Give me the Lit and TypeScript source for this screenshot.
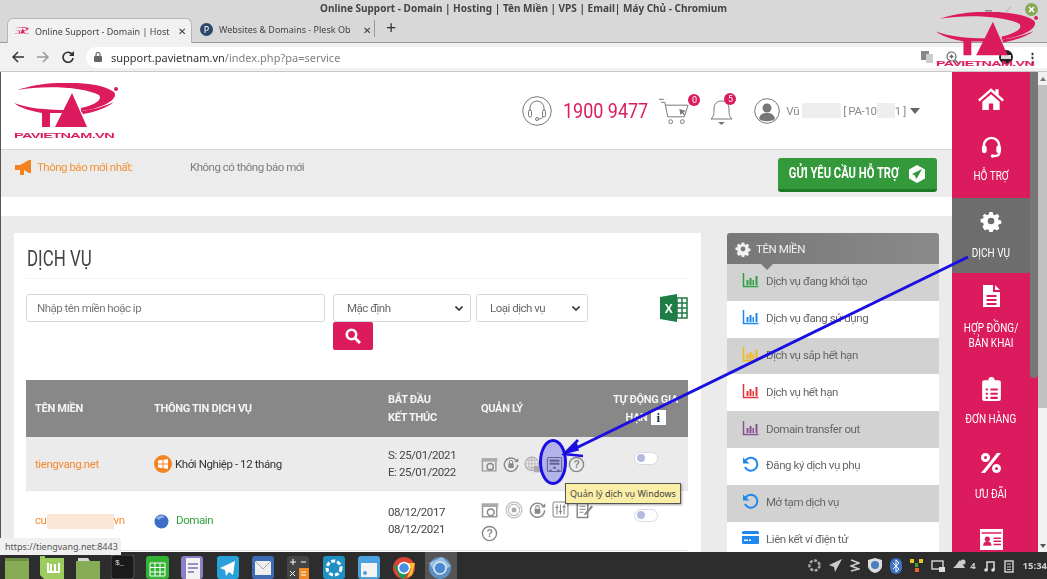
import { LitElement, html, css, svg, unsafeCSS } from "lit";
import { customElement } from "lit/decorators.js";

const PINK = "#dc1b5e";
const pink = unsafeCSS(PINK);

const logo = (w: number) => html`<svg width=${w} height=${(w * 56) / 104} viewBox="0 0 104 56">
  <g fill=${PINK}>
    <path d="M4 7C30-3 84-3 100 9c5 6-9 16-33 19v-3c13-3 22-8 18-13C70 4 30 2 4 7z" />
    <path d="M0 20c14 5 30 7 52 7l-1 3H36v14h-8V30C17 28 6 25 0 20z" />
    <path d="M58 10l15 34H41z" />
    <path d="M67 28c12-1 24-5 33-9-8 6-19 10-31 12z" />
  </g>
  <circle cx="102" cy="6" r="2" fill=${PINK} />
  <text x="0" y="55" textLength="100" lengthAdjust="spacingAndGlyphs" font-family="Liberation Sans" font-weight="700" font-size="8" fill=${PINK}>PAVIETNAM.VN</text>
</svg>`;

const ic = (size: number, body: unknown, cls = "") =>
  html`<svg class=${cls} width=${size} height=${size} viewBox="0 0 24 24">${body}</svg>`;

const gear = svg`<path fill="currentColor" fill-rule="evenodd" d="M10 1h4l.6 3 2.2.9 2.6-1.7 2.8 2.8-1.7 2.6.9 2.2 3 .6v4l-3 .6-.9 2.2 1.7 2.6-2.8 2.8-2.6-1.7-2.2.9-.6 3h-4l-.6-3-2.2-.9-2.6 1.7L1.600 19l1.700-2.600-.9-2.200-3-.6v-4l3-.6.9-2.200L1.600 6l2.800-2.800L7 4.900l2.200-.9zM12 8a4 4 0 100 8 4 4 0 000-8z" transform="translate(1.200 1.200) scale(.9)" />`;
const home = svg`<path fill="currentColor" d="M12 3L0 13.500l1.500 1.700L12 6l10.500 9.200 1.500-1.700L19 9V4h-3v2.400zM4 15.500V23h6v-6h4v6h6v-7.500L12 8.500z" />`;
const headset = svg`<path fill="none" stroke="currentColor" stroke-width="2.600" d="M4 14v-3a8 8 0 0116 0v8c0 2-2 3-6 3" /><rect x="2" y="11" width="5" height="8" rx="2.500" fill="currentColor" /><rect x="17" y="11" width="5" height="8" rx="2.500" fill="currentColor" /><circle cx="13" cy="22" r="1.800" fill="currentColor" />`;
const docIcon = svg`<path fill="currentColor" fill-rule="evenodd" d="M4 1h10v7h7v15H4zM16 1l5 5h-5zM7.500 11v2h10v-2zm0 4v2h10v-2zm0 4v2h10v-2z" />`;
const clipboard = svg`<path fill="currentColor" fill-rule="evenodd" d="M5 3h4a3 3 0 016 0h4a2 2 0 012 2v16a2 2 0 01-2 2H5a2 2 0 01-2-2V5a2 2 0 012-2zm6 8v2h7v-2zm0 4v2h7v-2zm0 4v2h7v-2zM6.500 11v2h2v-2zm0 4v2h2v-2zm0 4v2h2v-2z" />`;
const percent = svg`<path fill="currentColor" fill-rule="evenodd" d="M18 2h4L6 22H2zM6.500 2a4.500 4.500 0 110 9 4.500 4.500 0 010-9zm0 3a1.500 1.500 0 100 3 1.500 1.500 0 000-3zm11 8a4.500 4.500 0 110 9 4.500 4.500 0 010-9zm0 3a1.500 1.500 0 100 3 1.500 1.500 0 000-3z" />`;
const card = svg`<path fill="currentColor" fill-rule="evenodd" d="M1 2h22v20H1zm1.500 3v1.500h19V5zM8 9a2.500 2.500 0 100 5 2.500 2.500 0 000-5zm-4 9h8c0-3-1.500-4-4-4s-4 1-4 4zm10-8v1.500h7V10zm0 3v1.500h7V13zm0 3v1.500h7V16z" />`;
const chart = (c: string) => html`<svg class="lead" width="16" height="16" viewBox="0 0 16 16">
  <path fill="none" stroke=${c} stroke-width="1.500" d="M1 1v13.500h15" />
  <path fill=${c} d="M4 8h2v5H4zM7 6h2v7H7zM10 8h1.500v5H10zM13 4h2v9h-2z" />
</svg>`;
const undo = html`<svg class="lead" width="17" height="17" viewBox="0 0 17 17">
  <path fill="none" stroke="#1e88f0" stroke-width="2" d="M3.500 4.500A6.500 6.500 0 1 1 3 11" />
  <path fill="#1e88f0" d="M1 1.500l6.500 6H1z" />
</svg>`;
const walletIcon = html`<svg class="lead" width="17" height="15" viewBox="0 0 17 15">
  <rect y="1" width="17" height="13" rx="1.500" fill="#1e88f0" />
  <rect y="4" width="17" height="2" fill="#fff" />
  <rect x="2" y="9.500" width="4" height="1.500" fill="#fff" /><rect x="7" y="9.500" width="2" height="1.500" fill="#fff" />
</svg>`;

const m = {
  browser: svg`<path fill="none" stroke="#999" stroke-width="2" d="M2 5h19v16H2z" /><path fill="#aaa" d="M1 3h22v5H1z" /><circle cx="13" cy="15" r="4.500" fill="none" stroke="#888" stroke-width="2" />`,
  lock: svg`<path fill="none" stroke="#888" stroke-width="2" d="M20 7A10 10 0 1 0 22 13" /><path fill="#888" d="M23 3v6h-6z" /><rect x="8" y="11" width="8" height="7" rx="1" fill="#888" /><path fill="none" stroke="#888" stroke-width="1.500" d="M9.500 11V9a2.500 2.500 0 015 0v2" />`,
  globe: svg`<circle cx="11" cy="11" r="9.500" fill="none" stroke="#aaa" stroke-width="1.500" /><path fill="none" stroke="#aaa" d="M1.500 11h19M3 6h16M3 16h16M11 1.500v19M11 1.500c-6 5-6 14 0 19M11 1.500c6 5 6 14 0 19" /><rect x="14" y="14" width="9" height="9" fill="#aaa" />`,
  server: svg`<rect x="2" y="2" width="20" height="20" rx="2" fill="none" stroke="#777" stroke-width="1.500" /><path fill="#777" d="M5 5h14v3H5zM5 9.500h14v3H5zM10 15h4v3h-4zM5 19h3v2H5zM16 19h3v2h-3z" />`,
  help: svg`<circle cx="12" cy="12" r="10" fill="none" stroke="#888" stroke-width="2" /><text x="12" y="17.500" text-anchor="middle" font-family="Liberation Sans" font-weight="700" font-size="15" fill="#888">?</text>`,
  disc: svg`<circle cx="12" cy="12" r="10.500" fill="none" stroke="#bbb" stroke-width="1.500" /><circle cx="12" cy="12" r="7.500" fill="none" stroke="#bbb" stroke-width="1.500" /><rect x="9" y="9" width="6" height="6" fill="#aaa" />`,
  sliders: svg`<rect x="1.500" y="1.500" width="21" height="21" rx="2" fill="none" stroke="#888" stroke-width="1.500" /><path stroke="#888" stroke-width="1.500" d="M7 5v14M12 5v14M17 5v14" /><path fill="#888" d="M5 8h4v2H5zM10 14h4v2h-4zM15 7h4v2h-4z" />`,
  edit: svg`<path fill="none" stroke="#888" stroke-width="2" d="M3 2h14v20H3z" /><path stroke="#888" stroke-width="1.500" d="M6 7h8M6 11h8M6 15h5" /><path fill="#888" d="M22 6l2 2-9 10-3 1 1-3z" />`,
};

const menuItems = [
  { t: "Dịch vụ đang khởi tạo", i: chart("#2f9e44") },
  { t: "Dịch vụ đang sử dụng", i: chart("#1e88f0") },
  { t: "Dịch vụ sắp hết hạn", i: chart("#f5b914") },
  { t: "Dịch vụ hết hạn", i: chart("#e5343e") },
  { t: "Domain transfer out", i: chart("#8a4f96") },
  { t: "Đăng ký dịch vụ phụ", i: undo },
  { t: "Mở tạm dịch vụ", i: undo },
  { t: "Liên kết ví điện tử", i: walletIcon },
];

const taskIcons = [
  html`<svg width="24" height="24"><rect y="3" width="24" height="21" fill="#86ad55" /><rect y="3" width="24" height="3" fill="#6d9144" /></svg>`,
  html`<svg width="24" height="24"><path fill="#9ccc5f" d="M0 1h5v2h19v21H4l-4-4z" /><path fill="none" stroke="#fff" stroke-width="2" d="M8 8v9h11V8M11 16V9M15 16V9" /></svg>`,
  html`<svg width="24" height="24"><path fill="#86ad55" d="M0 6h24v18H0z" /><path fill="#d7d7d7" d="M2 3h10l2 3H2z" /></svg>`,
  html`<svg width="24" height="24"><rect width="23" height="24" rx="3" fill="#1a1a1a" stroke="#555" /><text x="4" y="10" font-size="8" font-family="Liberation Mono" fill="#ddd">$_</text></svg>`,
  html`<svg width="24" height="24"><rect y="1" width="23" height="23" rx="3" fill="#33b233" /><path fill="none" stroke="#fff" d="M4 8h15v13H4zM4 12.500h15M4 17h15M9 8v13M14 8v13" /></svg>`,
  html`<svg width="24" height="24"><rect y="1" width="22" height="23" rx="3" fill="#8b7fc7" /><rect x="5" y="3" width="14" height="21" fill="#f2f2f2" /><path stroke="#7a6fb8" stroke-width="1.500" d="M7 9h10M7 13h10M7 17h6" /></svg>`,
  html`<svg width="24" height="24"><rect y="1" width="22" height="23" rx="3" fill="#2aa0da" /><path fill="#fff" d="M18 6L3 13l5 2 1 6 3-4 4 3z" /></svg>`,
  html`<svg width="24" height="24"><rect y="1" width="22" height="23" rx="3" fill="#3d6cb5" /><rect x="3" y="6" width="16" height="14" fill="#eee" /><path fill="none" stroke="#aaa" d="M3 6l8 8 8-8" /></svg>`,
  html`<svg width="24" height="24"><rect y="1" width="22" height="23" rx="3" fill="#444" /><rect x="12" y="13" width="10" height="11" fill="#f08a24" /><path stroke="#fff" d="M3 7h6M6 4v6M14 7h5M3 16l5 5M8 16l-5 5M14 17h5M14 20h5" /></svg>`,
  html`<svg width="24" height="24"><rect y="1" width="22" height="23" rx="3" fill="#1f8fc4" /><circle cx="11" cy="13" r="7" fill="none" stroke="#fff" stroke-width="3" stroke-dasharray="4 2" /></svg>`,
  html`<svg width="24" height="24"><rect y="1" width="22" height="23" rx="3" fill="#4aa3df" /><rect x="3" y="8" width="16" height="14" fill="#f3f3f3" /><circle cx="7" cy="18" r="2" fill="#4aa3df" /></svg>`,
  html`<svg width="24" height="24"><circle cx="11" cy="13" r="11" fill="#db4437" /><path fill="#0f9d58" d="M1 10l6 12 4 2 5-10z" /><path fill="#fbc02d" d="M11 8h11l-3 12-5 3 4-9z" /><circle cx="11" cy="13" r="5.500" fill="#4a90e2" stroke="#fff" stroke-width="1.500" /></svg>`,
  html`<svg width="24" height="24"><circle cx="11" cy="13" r="11" fill="#5d8fc0" /><path fill="#9cc0df" d="M0 8l8 12 14-9-9-9z" /><circle cx="11" cy="13" r="6" fill="#4a8ad4" stroke="#dfe8f0" stroke-width="1.500" /></svg>`,
];

@customElement("app-root")
export class AppRoot extends LitElement {
  static styles = css`
    :host {
      display: block;
      width: 1047px;
      height: 579px;
      overflow: hidden;
      position: relative;
      font-family: Roboto, "Noto Sans", sans-serif;
      letter-spacing: -0.35px;
    }
    svg {
      display: block;
      flex: none;
    }
    .shell {
      height: 579px;
      display: flex;
      flex-direction: column;
      filter: blur(0.3px);
    }
    .titlebar {
      height: 17px;
      background: #d8d8d8;
      text-align: center;
      font: 700 10px/16px "Noto Sans", sans-serif;
      letter-spacing: 0;
      color: #444;
    }
    .tabs {
      height: 26px;
      background: #d8d8d8;
      display: flex;
      align-items: flex-end;
      padding-left: 7px;
      border-bottom: 1px solid #9a9a9a;
      box-sizing: border-box;
      font: 400 9px "Noto Sans", sans-serif;
      letter-spacing: 0;
      color: #444;
    }
    .tab {
      height: 25px;
      display: flex;
      align-items: center;
      box-sizing: border-box;
    }
    .tab.active {
      width: 185px;
      background: #f1f1f1;
      border: 1px solid #b5b5b5;
      border-bottom: 0;
      border-radius: 6px 6px 0 0;
      padding-left: 7px;
      margin-bottom: -1px;
    }
    .tab.other {
      width: 184px;
      padding-left: 8px;
    }
    .tab .name {
      flex: 1;
      white-space: nowrap;
      margin-left: 6px;
    }
    .tab .x {
      width: 18px;
      flex: none;
      text-align: center;
      font-size: 10px;
      color: #333;
    }
    .plus {
      font-size: 18px;
      padding: 0 0 2px 11px;
      border-left: 1px solid #999;
      line-height: 15px;
      margin-bottom: 5px;
      color: #333;
      margin-left: -2px;
    }
    .dot-p {
      width: 13px;
      height: 13px;
      border-radius: 50%;
      background: #2c4a68;
      color: #fff;
      font-size: 9px;
      text-align: center;
      line-height: 13px;
      flex: none;
    }
    .toolbar {
      height: 29px;
      background: #f1f1f1;
      border-bottom: 1px solid #c8c8c8;
      box-sizing: border-box;
      display: flex;
      align-items: center;
      padding: 3px 0 3px 12px;
      gap: 13px;
      color: #444;
    }
    .omni {
      flex: 1;
      height: 21px;
      background: #fff;
      border-radius: 11px 0 0 11px;
      display: flex;
      align-items: center;
      padding-left: 8px;
      font: 400 11px "Noto Sans", sans-serif;
      letter-spacing: 0;
      color: #808080;
      margin-left: -1px;
    }
    .omni b {
      font-weight: 400;
      color: #333;
    }
    .omni .tools {
      margin-left: auto;
      display: flex;
      align-items: center;
      gap: 13px;
      padding-right: 8px;
      color: #666;
    }
    .page {
      flex: 1;
      min-height: 0;
      display: flex;
      overflow: hidden;
      background: #ebebeb;
    }
    .main {
      width: 952px;
      display: flex;
      flex-direction: column;
      overflow: hidden;
      border-left: 1px solid #555;
      box-sizing: border-box;
    }
    .head {
      height: 77px;
      flex: none;
      background: #fff;
      border-bottom: 1px solid #d8d8d8;
      display: flex;
      align-items: center;
      padding-left: 13px;
      box-sizing: content-box;
    }
    .head .right {
      margin-left: auto;
      display: flex;
      align-items: center;
      margin-right: 32px;
    }
    .phone {
      display: inline-block;
      width: 85px;
      font-size: 21px;
      color: ${pink};
      margin: 0 11px;
      letter-spacing: 0;
      white-space: nowrap;
      transform: scaleX(0.855);
      transform-origin: left center;
    }
    .badged {
      position: relative;
    }
    .badge {
      position: absolute;
      width: 12px;
      height: 12px;
      border-radius: 50%;
      background: ${pink};
      color: #fff;
      font-size: 9px;
      line-height: 12px;
      text-align: center;
    }
    .user {
      font-size: 11.500px;
      color: #8a8a8a;
      margin-left: 6px;
      display: flex;
      align-items: center;
      white-space: nowrap;
    }
    .blur {
      display: inline-block;
      background: #eeeeee;
      height: 15px;
    }
    .caret {
      width: 0;
      height: 0;
      border: 5px solid transparent;
      border-top: 6px solid #666;
      border-bottom: 0;
      margin-left: 4px;
    }
    .notice {
      height: 47px;
      flex: none;
      background: #ececec;
      display: flex;
      align-items: flex-start;
      padding: 8px 0 0 14px;
      box-sizing: border-box;
      font-size: 11.500px;
      letter-spacing: -0.5px;
      color: #7d7d7d;
      line-height: 19px;
    }
    .notice .hot {
      width: 153px;
      color: #f59238;
      margin-left: 4px;
    }
    .send {
      margin-left: auto;
      margin-right: 15px;
      width: 159px;
      height: 34px;
      box-sizing: border-box;
      border-bottom: 3px solid #1c7a25;
      border-radius: 3px;
      background: #33993a;
      color: #fff;
      font-size: 14px;
      font-weight: 700;
      display: flex;
      align-items: center;
      justify-content: center;
      gap: 9px;
      letter-spacing: 0;
    }
    .send span {
      transform: scaleX(0.8);
      margin: 0 -14px;
      white-space: nowrap;
    }
    .strip {
      height: 19px;
      flex: none;
      background: #fff;
    }
    .body {
      flex: 1;
      display: flex;
      padding: 17px 0 0 13px;
      min-height: 0;
    }
    .cardbox {
      width: 687px;
      flex: none;
      background: #fff;
      padding: 0 13px 0 12px;
      box-sizing: border-box;
      overflow: hidden;
    }
    h2 {
      margin: 0;
      height: 45px;
      padding-left: 1px;
      font-size: 22px;
      font-weight: 400;
      line-height: 52px;
      color: #444;
      border-bottom: 1px solid #f3f3f3;
      letter-spacing: 0;
    }
    h2 span {
      display: inline-block;
      transform: scaleX(0.77);
      transform-origin: left center;
    }
    .filters {
      display: grid;
      grid-template-columns: 307px 143px 112px 1fr;
      grid-template-rows: 28px 28px;
      margin-top: 15px;
      height: 86px;
      font-size: 11.500px;
      letter-spacing: -0.5px;
      color: #666;
    }
    .field {
      height: 28px;
      border: 1px solid #d3d8de;
      border-radius: 3px;
      box-sizing: border-box;
      display: flex;
      align-items: center;
      padding-left: 13px;
      background: #fff;
      justify-content: space-between;
    }
    .field.input {
      width: 299px;
      padding-left: 10px;
      color: #777;
    }
    .field.def {
      width: 138px;
    }
    .field .chev {
      margin-right: 7px;
    }
    .fbtn {
      grid-column: 2;
      grid-row: 2;
      width: 40px;
      height: 28px;
      background: ${pink};
      border-radius: 2px;
      display: flex;
      align-items: center;
      justify-content: center;
    }
    .excel {
      justify-self: end;
    }
    table {
      width: 662px;
      border-collapse: collapse;
      table-layout: fixed;
      font-size: 11.500px;
      letter-spacing: -0.42px;
    }
    th {
      background: #888;
      color: #f4f4f4;
      text-align: left;
      font-weight: 700;
      padding: 0 0 0 9px;
      height: 57px;
      line-height: 18px;
      font-size: 11px;
      letter-spacing: -0.3px;
    }
    th.auto {
      text-align: center;
      padding: 0;
    }
    .info {
      display: inline-block;
      width: 15px;
      height: 15px;
      line-height: 15px;
      background: #fff;
      color: #234;
      font-family: "Liberation Serif", serif;
      font-weight: 700;
      font-size: 13px;
      text-align: center;
      vertical-align: middle;
      margin-left: 3px;
    }
    td {
      padding: 2px 0 0 9px;
      color: #444;
      line-height: 17.500px;
      border-bottom: 1px solid #e4e4e4;
      box-sizing: border-box;
    }
    td.sw {
      padding: 0;
    }
    tr.r1 td {
      height: 53px;
      background: #ebebeb;
    }
    tr.r2 td {
      height: 60px;
    }
    .dom {
      color: #f58a33;
      white-space: nowrap;
    }
    .svc {
      display: flex;
      align-items: center;
      gap: 3px;
      color: #333;
    }
    .svc.g {
      color: #34a33c;
      gap: 7px;
    }
    .tools {
      display: flex;
      flex-wrap: wrap;
      align-items: center;
      gap: 5px;
    }
    .tools.wide {
      gap: 6px;
      width: 118px;
    }
    .toggle {
      width: 24px;
      height: 13px;
      border: 1px solid #d8d8e4;
      border-radius: 7px;
      background: #fff;
      box-sizing: border-box;
      margin: 0 auto 10px;
      padding: 1.500px 2px;
    }
    .toggle i {
      display: block;
      width: 8px;
      height: 8px;
      border-radius: 50%;
      background: #b3bbe2;
    }
    .side {
      width: 212px;
      margin-left: 26px;
      flex: none;
      font-size: 11.500px;
      letter-spacing: -0.42px;
      color: #666;
    }
    .side-h {
      height: 31px;
      background: linear-gradient(90deg, #777, #8a8a8a);
      border-radius: 3px 3px 0 0;
      color: #f2f2f2;
      display: flex;
      align-items: center;
      gap: 5px;
      padding-left: 8px;
      position: relative;
    }
    .side-h::after {
      content: "";
      position: absolute;
      left: 34px;
      top: 31px;
      border: 6px solid transparent;
      border-top: 6px solid #7b7b7b;
      border-bottom: 0;
    }
    .side-i {
      height: 36.800px;
      display: flex;
      align-items: center;
      gap: 7px;
      padding: 0 0 2px 15px;
      box-sizing: border-box;
      background: #fff;
    }
    .side-i:nth-child(odd) {
      background: #d2d2d2;
    }
    .side-i .lead {
      width: 17px;
      margin-top: -2px;
    }
    .rail {
      width: 78px;
      flex: none;
      background: ${pink};
      color: #fff;
      font-size: 12.500px;
      letter-spacing: 0;
      text-align: center;
      overflow: hidden;
    }
    .rail a {
      display: flex;
      flex-direction: column;
      align-items: center;
      line-height: 15px;
      box-sizing: border-box;
    }
    .rail a span {
      display: block;
      white-space: nowrap;
      transform: scaleX(0.8);
    }
    .rail a.on {
      background: #6d6d6d;
    }
    .rail-bar {
      width: 8px;
      flex: none;
      background: ${pink};
    }
    .rail-bar div {
      height: 306px;
      background: #777;
      border-radius: 0 0 4px 4px;
    }
    .page-bar {
      width: 9px;
      flex: none;
      background: #f1f1f1;
      display: flex;
      flex-direction: column;
      align-items: center;
    }
    .page-bar div {
      width: 100%;
      height: 323px;
      background: #c1c1c1;
    }
    .page-bar .up,
    .page-bar .down {
      width: 0;
      height: 0;
      border: 3px solid transparent;
      background: none;
    }
    .page-bar .up {
      border-bottom: 4px solid #777;
      border-top: 0;
      margin: 5px 0 4px;
    }
    .page-bar .down {
      border-top: 4px solid #555;
      border-bottom: 0;
      margin-top: auto;
      margin-bottom: 4px;
    }
    .taskbar {
      height: 24px;
      flex: none;
      background: #2d2d2d;
      display: flex;
      align-items: flex-start;
      padding: 3px 0 0 5px;
      gap: 11.300px;
      overflow: hidden;
      position: relative;
    }
    .taskbar .slot {
      position: relative;
    }
    .taskbar .slot.on::before {
      content: "";
      position: absolute;
      inset: -3px -4px -3px -4px;
      background: #555;
    }
    .taskbar .slot svg {
      position: relative;
    }
    .tray {
      margin-left: auto;
      display: flex;
      align-items: center;
      gap: 8px;
      height: 21px;
      font: 700 9.500px "Noto Sans", sans-serif;
      letter-spacing: 0;
      color: #cfcfcf;
    }
    .overlay {
      position: absolute;
      inset: 0;
      pointer-events: none;
    }
    .wm {
      position: absolute;
      left: 936px;
      top: 12px;
    }
    .winbtns {
      position: absolute;
      top: 3px;
      left: 985px;
      display: flex;
      gap: 11px;
      align-items: center;
    }
    .arrows {
      position: absolute;
      left: 0;
      top: 0;
    }
    .tip {
      position: absolute;
      left: 565px;
      top: 483px;
      width: 116px;
      height: 21px;
      box-sizing: border-box;
      background: #fbefa8;
      border: 1px solid #555;
      box-shadow: 1px 1px 2px rgba(0, 0, 0, 0.35);
      font: 400 9px/19px "Noto Sans", sans-serif;
      letter-spacing: 0;
      white-space: nowrap;
      color: #444;
      text-align: center;
    }
    .status {
      position: absolute;
      left: 0;
      top: 538px;
      width: 121px;
      height: 17px;
      background: #f0f0f0;
      border-radius: 0 3px 0 0;
      font: 400 9px/17px "Noto Sans", sans-serif;
      letter-spacing: 0;
      color: #555;
      padding-left: 5px;
      box-sizing: border-box;
    }
  `;

  render() {
    return html`
      <div class="shell">
        <div class="titlebar">Online Support - Domain | Hosting | Tên Miền | VPS | Email| Máy Chủ - Chromium</div>
        <div class="tabs">
          <div class="tab active">
            ${logo(14)}
            <span class="name">Online Support - Domain | Host</span>
            <span class="x">✕</span>
          </div>
          <div class="tab other">
            <span class="dot-p">P</span>
            <span class="name">Websites &amp; Domains - Plesk Ob</span>
            <span class="x">✕</span>
          </div>
          <span class="plus">+</span>
        </div>
        <div class="toolbar">
          <svg width="12" height="12" viewBox="0 0 12 12"><path fill="none" stroke="#333" stroke-width="1.500" d="M12 6H1.500M6 1L1 6l5 5" /></svg>
          <svg width="12" height="12" viewBox="0 0 12 12"><path fill="none" stroke="#999" stroke-width="1.500" d="M0 6h10.500M6 1l5 5-5 5" /></svg>
          <svg width="12" height="12" viewBox="0 0 12 12"><path fill="none" stroke="#333" stroke-width="1.700" d="M10.500 4A5 5 0 1 0 11 7" /><path fill="#333" d="M12 0v5H7z" /></svg>
          <div class="omni">
            <svg width="8" height="10" viewBox="0 0 8 10" style="margin-right:9px"><rect y="4" width="8" height="6" rx="1" fill="#666" /><path fill="none" stroke="#666" stroke-width="1.200" d="M2 4V2.500a2 2 0 014 0V4" /></svg>
            <span><b>support.pavietnam.vn</b>/index.php?pa=service</span>
            <span class="tools">
              <svg width="12" height="12"><rect width="8" height="9" fill="#888" /><rect x="5" y="3" width="7" height="9" fill="#ccc" /></svg>
              <svg width="13" height="13" viewBox="0 0 13 13"><circle cx="5.500" cy="5.500" r="4.500" fill="none" stroke="#666" stroke-width="1.200" /><path stroke="#666" stroke-width="1.500" d="M9 9l4 4M3.500 5.500h4M5.500 3.500v4" /></svg>
              <span style="width:14px"></span>
              <svg width="14" height="14"><circle cx="7" cy="7" r="7" fill="#222" /><rect x="2" y="5" width="10" height="4" fill="#ddd" /></svg>
              <span style="font-size:13px;color:#333;line-height:12px;font-weight:700">⋮</span>
            </span>
          </div>
        </div>

        <div class="page">
          <div class="main">
            <div class="head">
              ${logo(104)}
              <div class="right">
                <svg width="30" height="30" viewBox="0 0 30 30">
                  <circle cx="15" cy="15" r="14.300" fill="none" stroke="#777" />
                  <path fill="none" stroke="#777" d="M8 15v-3a7 7 0 0114 0v3M21 20c0 2-2 3-5 3" />
                  <rect x="6.500" y="14" width="3" height="7" rx="1.500" fill="none" stroke="#777" />
                  <rect x="20.500" y="14" width="3" height="7" rx="1.500" fill="none" stroke="#777" />
                  <circle cx="15" cy="23" r="1.500" fill="none" stroke="#777" />
                </svg>
                <span class="phone">1900 9477</span>
                <div class="badged" style="margin-right:18px">
                  <svg width="33" height="28" viewBox="0 0 34 28">
                    <path fill="none" stroke="#777" d="M0 2h5M2 5h4l3 15h17l4-12H7" />
                    <path fill="#777" d="M21 12l7 2-3 1 2 3-1 1-2-3-2 2z" />
                    <circle cx="12" cy="25" r="2" fill="none" stroke="#777" />
                    <circle cx="24" cy="25" r="2" fill="none" stroke="#777" />
                  </svg>
                  <span class="badge" style="top:-3px;right:-8px">0</span>
                </div>
                <div class="badged" style="margin-right:21px">
                  <svg width="23" height="28" viewBox="0 0 23 28">
                    <path fill="none" stroke="#777" d="M1 22c3-3 3-5 3-10s3-8 7.500-8 7.500 3 7.500 8 0 7 3 10z" />
                    <path fill="#777" d="M8 25h7l-3.500 3z" />
                  </svg>
                  <span class="badge" style="top:-4px;right:-3px">5</span>
                </div>
                <svg width="26" height="26" viewBox="0 0 26 26">
                  <circle cx="13" cy="13" r="12.300" fill="none" stroke="#777" />
                  <circle cx="13" cy="10" r="4.500" fill="#777" />
                  <path fill="#777" d="M5 21c1-5 4-6 8-6s7 1 8 6c-4 3-12 3-16 0z" />
                </svg>
                <span class="user">
                  Vũ&nbsp;<span class="blur" style="width:39px"></span>&nbsp;[ PA-10<span class="blur" style="width:18px"></span>1 ]
                  <span class="caret"></span>
                </span>
              </div>
            </div>
            <div class="notice">
              <svg width="18" height="16" viewBox="0 0 18 16" style="margin-top:2px"><path fill="#f58220" d="M0 5h5l9-5h2v13h-2L9 10v5H5v-5H0z" /></svg>
              <span class="hot">Thông báo mới nhất:</span>
              <span>Không có thông báo mới</span>
              <div class="send">
                <span>GỬI YÊU CẦU HỖ TRỢ</span>
                <svg width="18" height="18" viewBox="0 0 18 18"><path fill="#fff" d="M9 0l8 4.500v9L9 18l-8-4.500v-9z" /><path fill="#33993a" d="M14 4L4 9l3 1.500L8 14l2-2.500z" /></svg>
              </div>
            </div>
            <div class="strip"></div>
            <div class="body">
              <div class="cardbox">
                <h2><span>DỊCH VỤ</span></h2>
                <div class="filters">
                  <div class="field input">Nhập tên miền hoặc ip</div>
                  <div class="field def">Mặc định ${this.chev()}</div>
                  <div class="field">Loại dịch vụ ${this.chev()}</div>
                  <svg class="excel" width="28" height="28" viewBox="0 0 28 28">
                    <path fill="#1e7c45" d="M0 3l17-3v28L0 25z" />
                    <path fill="none" stroke="#1e7c45" stroke-width="1.500" d="M17 4h10v20H17zM17 9h10M17 14h10M17 19h10M22 4v20" />
                    <text x="8.500" y="19" text-anchor="middle" font-family="Liberation Sans" font-weight="700" font-size="12" fill="#fff">X</text>
                  </svg>
                  <div class="fbtn">
                    <svg width="16" height="16" viewBox="0 0 16 16"><circle cx="6.500" cy="6.500" r="4.700" fill="none" stroke="#fff" stroke-width="2.600" /><path stroke="#fff" stroke-width="3" d="M10 10l5 5" /></svg>
                  </div>
                </div>
                <table>
                  <colgroup><col style="width:119px" /><col style="width:234px" /><col style="width:93px" /><col style="width:131px" /><col style="width:85px" /></colgroup>
                  <tr>
                    <th>TÊN MIỀN</th>
                    <th>THÔNG TIN DỊCH VỤ</th>
                    <th>BẮT ĐẦU<br />KẾT THÚC</th>
                    <th>QUẢN LÝ</th>
                    <th class="auto">TỰ ĐỘNG GIA<br />HẠN<span class="info">i</span></th>
                  </tr>
                  <tr class="r1">
                    <td class="dom">tiengvang.net</td>
                    <td>
                      <div class="svc">
                        <svg width="18" height="18" viewBox="0 0 18 18"><circle cx="9" cy="9" r="9" fill="#f58220" /><path fill="#fff" d="M4 5.500l4.500-.7v3.700H4zM9.500 4.700L14 4v4.500H9.500zM4 9.500h4.500v3.700L4 12.500zM9.500 9.500H14V14l-4.500-.7z" /></svg>
                        Khởi Nghiệp - 12 tháng
                      </div>
                    </td>
                    <td>S: 25/01/2021<br />E: 25/01/2022</td>
                    <td>
                      <div class="tools">
                        ${ic(17, m.browser)} ${ic(16, m.lock)} ${ic(17, m.globe)} ${ic(17, m.server)} ${ic(17, m.help)}
                      </div>
                    </td>
                    <td class="sw"><div class="toggle"><i></i></div></td>
                  </tr>
                  <tr class="r2">
                    <td class="dom">cu<span class="blur" style="width:67px;background:#fce6d6;vertical-align:middle"></span>vn</td>
                    <td>
                      <div class="svc g">
                        <svg width="15" height="15" viewBox="0 0 15 15"><circle cx="7.500" cy="7.500" r="7" fill="#3f6fc4" /><path fill="#8fb0e8" d="M2 4c3-3 7-3 9-1-2 1-5 1-6 3z" /></svg>
                        Domain
                      </div>
                    </td>
                    <td>08/12/2017<br />08/12/2021</td>
                    <td>
                      <div class="tools wide">
                        ${ic(18, m.browser)} ${ic(18, m.disc)} ${ic(17, m.lock)} ${ic(17, m.sliders)} ${ic(18, m.edit)} ${ic(17, m.help)}
                      </div>
                    </td>
                    <td class="sw"><div class="toggle"><i></i></div></td>
                  </tr>
                </table>
              </div>
              <div class="side">
                <div class="side-h">${ic(16, gear)} TÊN MIỀN</div>
                <div>
                  ${menuItems.map(
                    (it) => html`<div class="side-i">${it.i}<span>${it.t}</span></div>`
                  )}
                </div>
              </div>
            </div>
          </div>
          <nav class="rail">
            <a style="height:53px;padding-top:13px">${ic(26, home)}</a>
            <a style="height:73px;padding-top:10px">${ic(23, headset)}<span style="margin-top:10px">HỖ TRỢ</span></a>
            <a class="on" style="height:75px;padding-top:12px">${ic(22, gear)}<span style="margin-top:13px">DỊCH VỤ</span></a>
            <a style="height:92px;padding-top:11px">${ic(24, docIcon)}<span style="margin-top:12px">HỢP ĐỒNG/<br />BẢN KHAI</span></a>
            <a style="height:75px;padding-top:12px">${ic(25, clipboard)}<span style="margin-top:9px">ĐƠN HÀNG</span></a>
            <a style="height:80px;padding-top:11px">${ic(24, percent)}<span style="margin-top:11px">ƯU ĐÃI</span></a>
            <a style="padding-top:7px">${ic(25, card)}</a>
          </nav>
          <div class="rail-bar"><div></div></div>
          <div class="page-bar"><div class="up"></div><div></div><div class="down"></div></div>
        </div>

        <div class="taskbar">
          ${taskIcons.map(
            (t, i) => html`<div class=${i === 12 ? "slot on" : "slot"}>${t}</div>`
          )}
          <div class="tray">
            <svg width="13" height="13" viewBox="0 0 13 13"><circle cx="6.500" cy="6.500" r="5" fill="none" stroke="#aaa" stroke-width="2.500" stroke-dasharray="3 1.500" /></svg>
            <svg width="13" height="13" viewBox="0 0 13 13"><path fill="#ccc" d="M13 0L0 6l5 2 1 5z" /></svg>
            <svg width="10" height="13" viewBox="0 0 10 13"><path fill="none" stroke="#ccc" stroke-width="1.500" d="M1 1l8 3-8 3 8 3-8 2" /></svg>
            <svg width="14" height="15" viewBox="0 0 14 15"><path fill="#ddd" d="M7 0l7 2v6c0 3-3 6-7 7-4-1-7-4-7-7V2z" /><circle cx="7" cy="7" r="4" fill="#4a7fc0" /></svg>
            <svg width="12" height="16" viewBox="0 0 12 16"><rect width="12" height="16" rx="6" fill="#3d74c4" /><path fill="none" stroke="#fff" d="M3 5l6 6-3 3V2l3 3-6 6" /></svg>
            <svg width="13" height="13" viewBox="0 0 13 13"><rect width="4" height="4" fill="#e5c62a" /><rect x="9" width="4" height="4" fill="#e5c62a" /><rect x="5" y="4" width="3" height="4" fill="#3f9f45" /><rect x="5" y="9" width="4" height="4" fill="#e8632a" /></svg>
            <svg width="14" height="12" viewBox="0 0 14 12"><path fill="none" stroke="#ccc" stroke-width="1.500" d="M1 1h11v8H1z" /><rect x="8" y="7" width="6" height="5" fill="#ddd" /></svg>
            <span style="display:flex;gap:4px;align-items:center">
              <svg width="13" height="13" viewBox="0 0 13 13"><path fill="#ccc" d="M7 1l5 8H0c3-2 4-5 7-8z" /><circle cx="10" cy="3" r="2.500" fill="#ccc" /></svg>
              4
            </span>
            <svg width="12" height="12" viewBox="0 0 12 12"><path fill="none" stroke="#ddd" stroke-width="1.500" d="M3 10V2h7v8" /><circle cx="2" cy="10" r="1.800" fill="#ddd" /><circle cx="9" cy="10" r="1.800" fill="#ddd" /></svg>
            <svg width="11" height="14" viewBox="0 0 11 14"><path fill="none" stroke="#ccc" stroke-width="1.500" d="M1 2h8v11H1z" /><path stroke="#ccc" d="M3 5h4M3 8h4M3 10.500h4" /></svg>
            <span>15:34</span>
          </div>
        </div>
      </div>

      <div class="overlay">
        <div class="winbtns">
          <svg width="8" height="8"><rect y="4" width="7" height="1.500" fill="#888" /></svg>
          <svg width="10" height="8"><path fill="none" stroke="#aaa" d="M2 6l5-5" /></svg>
          <svg width="13" height="13"><circle cx="6.500" cy="6.500" r="6.500" fill="#8aa956" /><path stroke="#fff" stroke-width="1.500" d="M4 4l5 5M9 4l-5 5" /></svg>
        </div>
        <div class="wm">${logo(102)}</div>
        <svg class="arrows" width="1047" height="579">
          <ellipse cx="553" cy="462" rx="12.500" ry="21.500" fill="rgba(50,50,230,.3)" stroke="#1a0fe0" stroke-width="3" />
          <path stroke="#1a0fe0" stroke-width="3" d="M968 257L570 451" />
          <path fill="#1a0fe0" d="M563 454.500l13-13 1.500 3 .5 3 1 3z" />
          <path fill="none" stroke="#1a0fe0" stroke-width="2.500" d="M578 440l-14 14 19 2" />
        </svg>
        <div class="tip">Quản lý dịch vụ Windows</div>
        <div class="status">https://tiengvang.net:8443</div>
      </div>
    `;
  }

  chev() {
    return html`<svg class="chev" width="8" height="5" viewBox="0 0 8 5"><path fill="none" stroke="#333" stroke-width="1.600" d="M.5.500L4 4 7.500.5" /></svg>`;
  }
}
